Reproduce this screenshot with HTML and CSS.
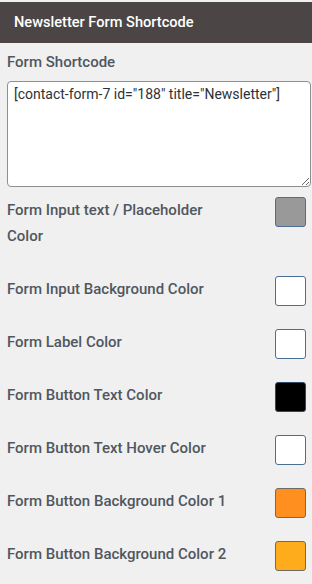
FILE: index.html
```html
<!DOCTYPE html>
<html>
<head>
    <title>Newsletter Form Shortcode</title>
    <link rel="stylesheet" href="styles.css">
</head>
<body>
    <div class="panel-title">Newsletter Form Shortcode</div>

    <div class="panel-body">
        <label class="field-label" for="shortcode">Form Shortcode</label>
        <textarea id="shortcode" class="shortcode-box">[contact-form-7 id="188" title="Newsletter"]</textarea>

        <div class="color-row">
            <div class="color-label">Form Input text / Placeholder Color</div>
            <button class="swatch swatch-grey"></button>
        </div>
        <div class="color-row">
            <div class="color-label">Form Input Background Color</div>
            <button class="swatch swatch-white"></button>
        </div>
        <div class="color-row">
            <div class="color-label">Form Label Color</div>
            <button class="swatch swatch-white"></button>
        </div>
        <div class="color-row">
            <div class="color-label">Form Button Text Color</div>
            <button class="swatch swatch-black"></button>
        </div>
        <div class="color-row">
            <div class="color-label">Form Button Text Hover Color</div>
            <button class="swatch swatch-white"></button>
        </div>
        <div class="color-row">
            <div class="color-label">Form Button Background Color 1</div>
            <button class="swatch swatch-orange"></button>
        </div>
        <div class="color-row">
            <div class="color-label">Form Button Background Color 2</div>
            <button class="swatch swatch-amber"></button>
        </div>
    </div>
</body>
</html>
```

FILE: styles.css
```css
body {
    margin: 0;
    padding-top: 2px;
    background-color: #f0f0f1;
    font-family: Roboto, "Liberation Sans", sans-serif;
    overflow: hidden;
}

.panel-title {
    height: 41px;
    line-height: 40px;
    padding-left: 14px;
    background-color: #4b4645;
    color: #ffffff;
    font-size: 14.6px;
    font-weight: 500;
}

.panel-body {
    padding: 6px 6px 0 7px;
}

.field-label {
    display: block;
    line-height: 26px;
    font-size: 15px;
    font-weight: 500;
    color: #50575e;
}

.shortcode-box {
    display: block;
    box-sizing: border-box;
    width: 304px;
    height: 106px;
    margin: 6px 0 10px;
    padding: 2px 6px;
    border: 1px solid #8c8f94;
    border-radius: 4px;
    background-color: #ffffff;
    color: #2c3338;
    font-family: Roboto, "Liberation Sans", sans-serif;
    font-size: 14px;
    line-height: 20px;
    resize: both;
}

.color-row {
    display: flex;
    justify-content: space-between;
    align-items: flex-start;
    margin-bottom: 23px;
}

.color-label {
    width: 230px;
    padding-bottom: 4px;
    line-height: 26px;
    font-size: 15px;
    font-weight: 500;
    color: #50575e;
}

.swatch {
    box-sizing: border-box;
    width: 31px;
    height: 30px;
    padding: 0;
    border: 1px solid #4a6f94;
    border-radius: 3px;
    cursor: pointer;
}

.swatch-grey {
    background-color: #999999;
}

.swatch-white {
    background-color: #ffffff;
}

.swatch-black {
    background-color: #000000;
    border-color: #2f4a66;
}

.swatch-orange {
    background-color: #ff8f1f;
    border-color: #6e6a66;
}

.swatch-amber {
    background-color: #ffac1c;
    border-color: #6e6a66;
}
```
